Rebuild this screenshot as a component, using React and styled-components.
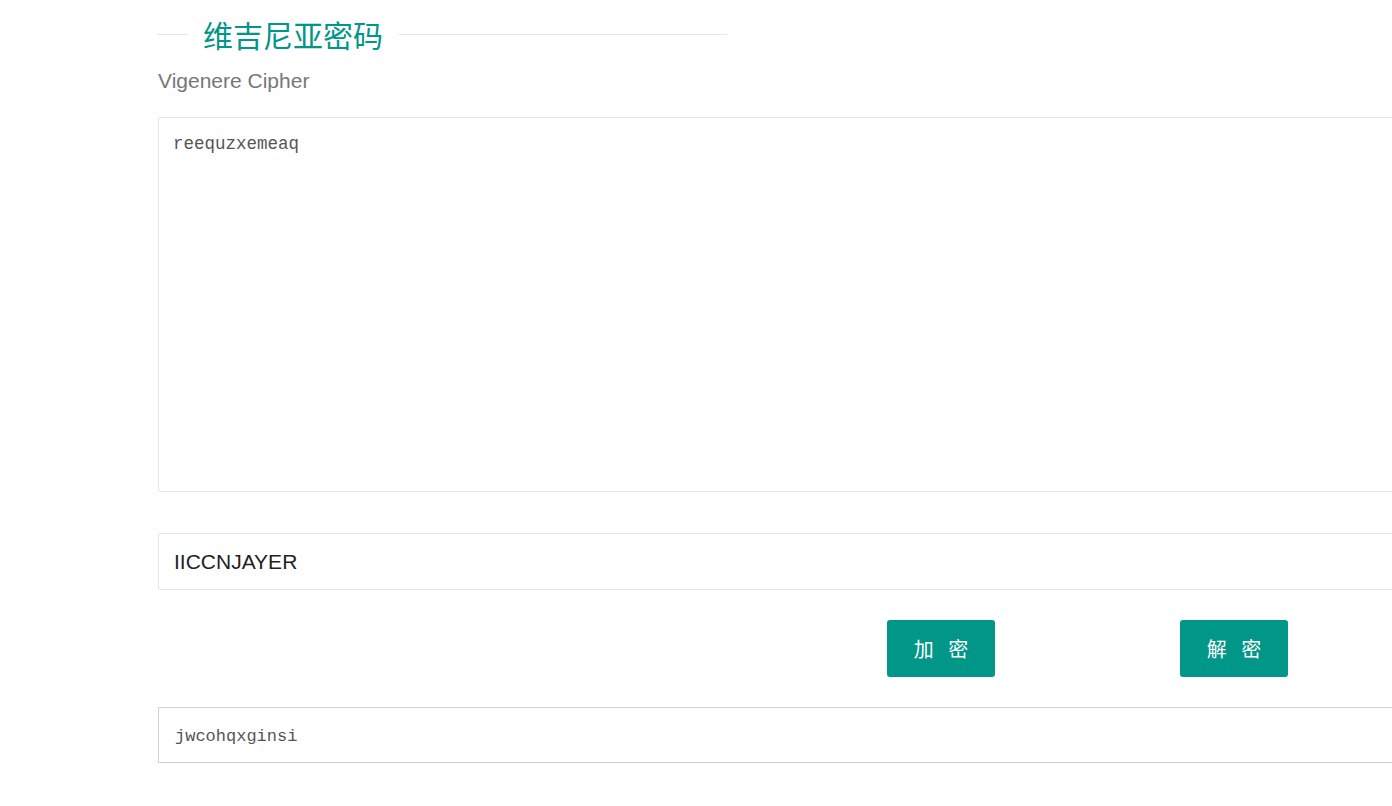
import styled, { createGlobalStyle } from "styled-components";

const GlobalStyle = createGlobalStyle`
  html, body {
    margin: 0;
    padding: 0;
    background: #fff;
    overflow: hidden;
  }
  body {
    font-family: "Liberation Sans", "Noto Sans CJK SC", Arial, sans-serif;
    color: #333;
  }
`;

const Page = styled.div`
  padding: 17px 0 0 158px;
  width: 1300px;
`;

const TitleRow = styled.div`
  display: flex;
  align-items: center;
  width: 569px;
  height: 34px;
`;

const Line = styled.span`
  height: 1px;
  background: #e6e6e6;
  flex: ${(p) => (p.$grow ? "1" : "0 0 30px")};
`;

const Title = styled.h1`
  margin: 0;
  padding: 0 16px 0 15px;
  font-size: 30px;
  line-height: 34px;
  font-weight: normal;
  color: #009688;
  font-family: "Noto Sans CJK SC", "Liberation Sans", sans-serif;
`;

const Subtitle = styled.p`
  margin: 18px 0 24px;
  font-size: 21px;
  line-height: 24px;
  color: #777;
`;

const TextArea = styled.textarea`
  display: block;
  box-sizing: border-box;
  width: 100%;
  height: 375px;
  margin: 0;
  padding: 14px 14px;
  border: 1px solid #e6e6e6;
  border-radius: 2px;
  resize: none;
  outline: none;
  font-family: "Liberation Mono", monospace;
  font-size: 17.5px;
  line-height: 24px;
  color: #555;
`;

const KeyInput = styled.input`
  display: block;
  box-sizing: border-box;
  width: 100%;
  height: 57px;
  margin: 41px 0 0;
  padding: 0 15px;
  border: 1px solid #e6e6e6;
  border-radius: 2px;
  outline: none;
  font-family: "Liberation Sans", Arial, sans-serif;
  font-size: 21px;
  color: #222;
`;

const Actions = styled.div`
  display: flex;
  gap: 185px;
  padding-left: 729px;
  margin: 30px 0;
`;

const Button = styled.button`
  width: 108px;
  height: 57px;
  padding: 0 0 0 5px;
  border: none;
  border-radius: 3px;
  background: #009688;
  color: #fff;
  font-family: "Noto Sans CJK SC", "Liberation Sans", sans-serif;
  font-size: 20px;
  letter-spacing: 5px;
  cursor: pointer;
`;

const Output = styled.div`
  box-sizing: border-box;
  height: 56px;
  padding: 2px 16px 0;
  display: flex;
  align-items: center;
  border: 1px solid #d2d2d2;
  font-family: "Liberation Mono", monospace;
  font-size: 17px;
  color: #555;
`;

export default function App() {
  return (
    <>
      <GlobalStyle />
      <Page>
        <TitleRow>
          <Line />
          <Title>维吉尼亚密码</Title>
          <Line $grow />
        </TitleRow>
        <Subtitle>Vigenere Cipher</Subtitle>
        <TextArea defaultValue="reequzxemeaq" />
        <KeyInput type="text" defaultValue="IICCNJAYER" />
        <Actions>
          <Button type="button">加 密</Button>
          <Button type="button">解 密</Button>
        </Actions>
        <Output>jwcohqxginsi</Output>
      </Page>
    </>
  );
}
